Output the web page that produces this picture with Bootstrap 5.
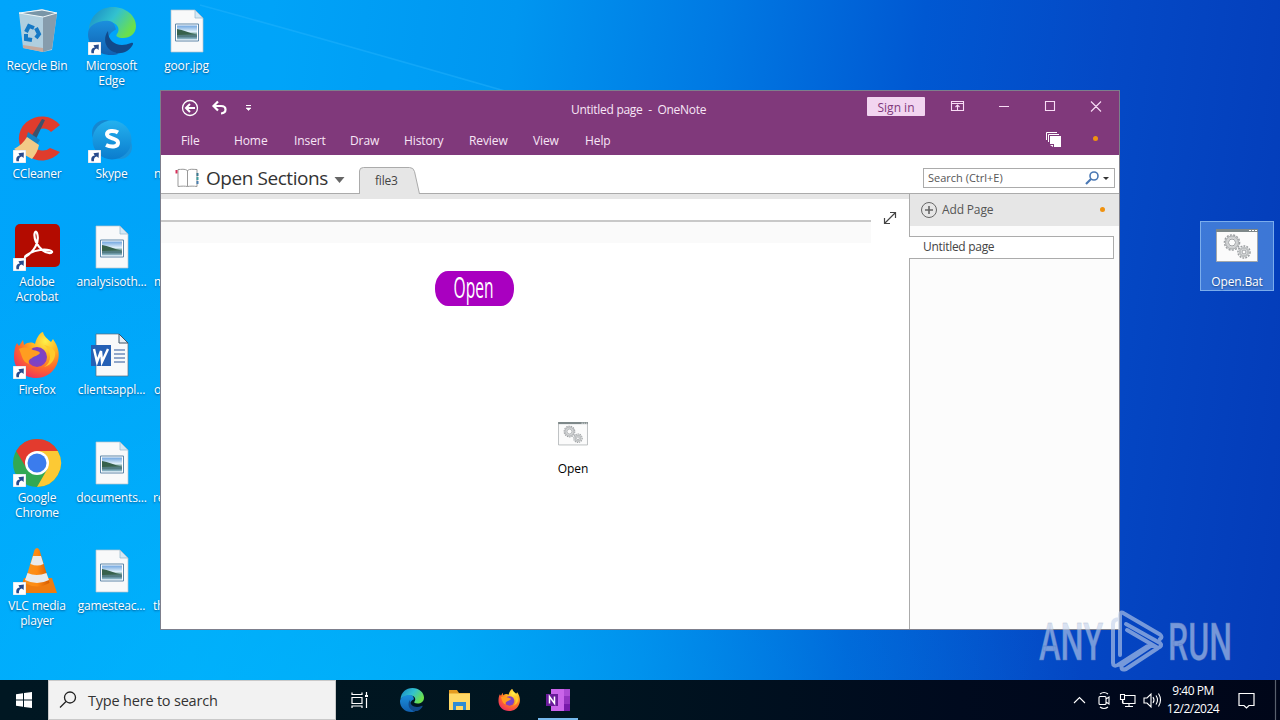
<!DOCTYPE html>
<html lang="en">
<head>
<meta charset="utf-8">
<title>Desktop</title>
<link href="https://cdn.jsdelivr.net/npm/bootstrap@5.3.0/dist/css/bootstrap.min.css" rel="stylesheet">
<style>
body{width:1280px;height:720px;overflow:hidden;font-family:"Open Sans","Noto Sans",sans-serif;font-size:12px;line-height:15px}
svg{display:block;flex:none;overflow:visible}
.desk{height:680px;background:
 radial-gradient(ellipse 760px 560px at 330px 760px,rgba(0,190,255,.65),rgba(0,190,255,0) 100%),
 linear-gradient(97deg,#00a5fb 0,#00a3f8 20%,#0096f0 38%,#0079e3 53%,#0058d2 68%,#0449c6 82%,#043bb8 100%)}
.ray{left:200px;top:0}
.icons{display:grid;grid-template-columns:74px 75px 75px;grid-auto-flow:column;grid-template-rows:repeat(6,108px);width:224px}
.dicon{padding-top:7px;color:#fff;text-align:center;text-shadow:0 1px 2px rgba(0,40,90,.65);line-height:15px;font-size:12px;letter-spacing:-.17px}
.dicon svg{width:48px;height:48px;margin:0 auto 3px}
.peek{padding:58px 0 0 5px;text-align:left}
.bat{left:1200px;top:221px;width:74px;height:70px;background:rgba(110,165,235,.55);border:1px solid rgba(150,195,245,.7)}
.bat svg{width:42px;height:34px;margin:7px auto 11px}
.win{left:160px;top:90px;width:960px;height:540px;border:1px solid #7d7f8c;background:#fff}
.purple{background:#80397b;color:#f8e6f6;height:64px}
.titlebar{height:32px}
.apptitle{margin-left:310px;padding-top:11px;white-space:pre;letter-spacing:-.28px}
.tabs{display:grid;grid-template-columns:53px 60px 56px 54px 65px 64px 52px 1fr 24px 20px;padding-left:20px;height:32px;padding-top:2px;letter-spacing:-.1px}
.signin{left:706px;top:6px;width:58px;height:19px;background:#f2d5f0;color:#80397b;border-radius:1px;line-height:22px}
.nbar{height:39px;border-bottom:1px solid #ababab;padding-left:14px}
.nbname{font-size:19px;line-height:38px;color:#333;letter-spacing:-.44px;padding:4px 0 0 7px;width:128px;white-space:nowrap}
.tabname{left:16px;top:6px;color:#444;letter-spacing:-.2px}
.sbox{width:192px;height:20px;border:1px solid #ababab;font-size:11px;color:#555;margin-top:13px}
.strip{height:5px;background:#e6e6e6}
.note{width:748px}
.side{width:210px;margin-top:-5px;height:435px;background:#fcfcfc}
.addp{height:32px;background:#e6e6e6;color:#555;border-left:1px solid #ababab}
.seg{border-left:1px solid #ababab}
.pg{height:23px;width:205px;background:#fff;border:1px solid #ababab;border-left:0;color:#444;padding-left:14px;line-height:20px;letter-spacing:-.3px}
.dot{width:5px;height:5px;border-radius:50%;background:#f0920f}
.rule{width:710px;height:23px;background:#fafafa;border-top:2px solid #c8c8c8}
.obtn{width:79px;height:35px;background:#a900c0;border-radius:13px/17px;margin:27px 0 0 274px}
.objt{width:60px;margin:116px 0 0 382px;color:#000;letter-spacing:-.1px}
.objt svg{margin:0 auto 15px}
.task{height:40px;background:linear-gradient(90deg,#001722,#001520 45%,#000a1e 75%,#000619);color:#fff}
.tsearch{width:288px;height:40px;background:#f2f2f2;border:1px solid #c9c9c9;color:#333;font-size:14.5px;letter-spacing:-.2px}
.on{width:40px;height:40px;margin-left:6px;border-bottom:2px solid #76b9ed}
.tb{width:49px;height:40px}
.clock{width:58px;line-height:18px;letter-spacing:-.5px}
.wm{left:1036px;top:604px}
</style>
</head>
<body class="m-0 position-relative">
<svg width="0" height="0" class="position-absolute">
<defs>
<linearGradient id="ph" x1="0" y1="0" x2="0" y2="1"><stop offset="0" stop-color="#6fa5df"/><stop offset=".45" stop-color="#e3f1fa"/><stop offset=".55" stop-color="#8fb7b4"/><stop offset=".75" stop-color="#456f75"/><stop offset="1" stop-color="#9cc7dc"/></linearGradient>
<linearGradient id="e1" x1="0" y1="0" x2="1" y2=".5"><stop offset="0" stop-color="#1684c4"/><stop offset=".55" stop-color="#32c2cf"/><stop offset="1" stop-color="#6be04b"/></linearGradient>
<linearGradient id="e2" x1="0" y1="0" x2="0" y2="1"><stop offset="0" stop-color="#1b8fdd"/><stop offset="1" stop-color="#1160b0"/></linearGradient>
<radialGradient id="ff" cx=".7" cy=".2" r=".9"><stop offset="0" stop-color="#fff04a"/><stop offset=".35" stop-color="#ffb020"/><stop offset=".65" stop-color="#ff6a2c"/><stop offset="1" stop-color="#ea2b63"/></radialGradient>
<radialGradient id="fp"><stop offset="0" stop-color="#6a48d7"/><stop offset="1" stop-color="#8b3fb8"/></radialGradient>
<linearGradient id="sk" x1="0" y1="0" x2="0" y2="1"><stop offset="0" stop-color="#24b1ef"/><stop offset="1" stop-color="#0b7ccd"/></linearGradient>
<linearGradient id="vl"><stop offset="0" stop-color="#f7941e"/><stop offset=".5" stop-color="#ff8a12"/><stop offset="1" stop-color="#d55c00"/></linearGradient>
<symbol id="lnk" viewBox="0 0 12 12"><path d="M0 0h12v12H0z" fill="#fff" stroke="#b9c9d8" stroke-width=".6"/><path d="M3.200 10.300c-.7-3 .3-5 3-5.300L5 3.100 10 2.400 9.800 7.300 8.200 6C6 6.500 5.300 8 5.500 10.300z" fill="#274b8d"/></symbol>
<symbol id="img" viewBox="0 0 48 48"><path d="M8 3h24l8 8v34H8z" fill="#f8f9fa" stroke="#b8c3cc" stroke-width=".7"/><path d="M32 3v8h8z" fill="#d4e8f5" stroke="#93b4ca" stroke-width=".7"/><path d="M12.500 17h23v17h-23z" fill="#fff" stroke="#5e86a8"/><path d="M14 18.500h20v14H14z" fill="url(#ph)"/><path d="M14 22c6 1 12 4 20 5.500L14 28z" fill="#37614c"/></symbol>
<symbol id="edge" viewBox="0 0 48 48"><path d="M1 22C2 9 12 0 25 0c13 0 23 9 23 19 0 8-6 12-13 12-5 0-8-2-6-4 4-5 0-12-8-12C12 15 5 18 1 22z" fill="url(#e1)"/><path d="M21 14C11 13 0 18 0 27c0 11 9 21 23 21 3 0 6-.5 8-1.500-7-1-11-7-11-13 0-6 4-9 8-11-1-5-3-8-7-8.500z" fill="url(#e2)"/><path d="M20 24c-4 5-4 13 1 18 6 6 17 6 23-3 2-3 1-4-1-3-12 5-23 0-23-12z" fill="#114a8b"/></symbol>
<symbol id="fox" viewBox="0 0 48 48"><path d="M4 12l2 3 4-6 1 5c4-3 8-3 11-1 2-8 6-12 8-12 1 5 5 7 8 10l2-3c5 7 7 14 5 22-3 11-12 17-22 17C11 47 1 38 1 26c0-6 1-11 3-14z" fill="url(#ff)"/><circle cx="24" cy="26" r="10" fill="url(#fp)"/><path d="M6 18c5-2 9-2 14 1 4 1 6 1 7 3-2 3-6 3-8 5-2 1-4 2-3 6-7-2-7-9-10-15z" fill="#ff9d20"/><path d="M31 14c8 6 8 18 0 22 8-2 12-9 11-15-2-4-6-6-11-7z" fill="#ffca2b"/></symbol>
<symbol id="gears" viewBox="0 0 42 34"><path d="M.5.5h41v32H.5z" fill="#fbfbfb" stroke="#a4a8ab"/><path d="M0 0h42v3H0z" fill="#7e8889"/><path d="M33 1h2v1h-2zm3 0h2v1h-2zm3 0h2v1h-2z" fill="#fff"/><g fill="none" stroke="#9b9ea1"><circle cx="16" cy="13.500" r="7.500" stroke-width="1.600" stroke-dasharray="2 1.300"/><circle cx="16" cy="13.500" r="5.500" stroke="#cfd1d2" stroke-width="3"/><circle cx="16" cy="13.500" r="6.500" stroke-width=".7"/><circle cx="16" cy="13.500" r="3.500"/><circle cx="28" cy="23" r="6" stroke-width="1.600" stroke-dasharray="1.800 1.200"/><circle cx="28" cy="23" r="4" stroke="#bec1c2" stroke-width="2.500"/><circle cx="28" cy="23" r="2"/></g></symbol>
</defs></svg>

<main class="desk position-relative">
<svg class="ray position-absolute" width="320" height="92"><path d="M0 5Q110 35 305 91L0 91z" fill="#00aeff" opacity=".16"/><path d="M0 5Q110 35 305 91" fill="none" stroke="#32b9ff" stroke-width="1.500" opacity=".35"/></svg>
<div class="icons position-relative">
 <div class="dicon"><svg viewBox="0 0 48 48"><path d="M6 6l23-4 15 4-5 37-9 2-20-4z" fill="#b9d1dd" opacity=".95"/><path d="M30 9l14-3-5 36-9 3z" fill="#869cac"/><path d="M6 6l23-3 15 3-14 4z" fill="#7996a8" stroke="#f0f8fb"/><path d="M10 38l20 3v4l-20-4z" fill="#c5a99d"/><g fill="none" stroke="#1679c5" stroke-width="4"><path d="M13 25l3-6 5 2M23 21l3 6-3 4M19 33l-6-1v-5"/></g></svg>Recycle Bin</div>
 <div class="dicon"><svg viewBox="0 0 48 48"><path d="M47 10A23 22 0 1 0 47 37L37 33A11 11 0 1 1 38 17z" fill="#df3c2c"/><path d="M29 4l3 1-9 19-5-2z" fill="#3d526c"/><path d="M15 17l12 8-4 6-10-7z" fill="#1683c4"/><path d="M14 22l12 8c-1 6-4 10-7 14L1 34c6-3 10-7 13-12z" fill="#f2ca87"/><use href="#lnk" x="0" y="35" width="13" height="13"/></svg>CCleaner</div>
 <div class="dicon"><svg viewBox="0 0 48 48"><rect x="2" y="1" width="45" height="43" rx="5" fill="#b30b00"/><path d="M12 34C21 29 27 19 24 10c-2-4-4 2-1 9 3 6 9 12 15 11 4-2-4-4-11-3-7 1-15 5-15 7z" fill="none" stroke="#fff" stroke-width="2.200"/><use href="#lnk" x="0" y="35" width="13" height="13"/></svg>Adobe<br>Acrobat</div>
 <div class="dicon"><svg viewBox="0 0 48 48"><use href="#fox"/><use href="#lnk" x="0" y="35" width="13" height="13"/></svg>Firefox</div>
 <div class="dicon"><svg viewBox="0 0 48 48"><circle cx="24" cy="24" r="24" fill="#32a853"/><path d="M3.200 12A24 24 0 0 1 44.800 12H24L14 30z" fill="#e33b2e"/><path d="M44.800 12A24 24 0 0 1 24 48L34.400 30 24 12z" fill="#fcc934"/><circle cx="24" cy="24" r="12" fill="#fff"/><circle cx="24" cy="24" r="9.500" fill="#3b7ced"/><use href="#lnk" x="0" y="35" width="13" height="13"/></svg>Google<br>Chrome</div>
 <div class="dicon"><svg viewBox="0 0 48 48"><path d="M11 31h28l5 15H6z" fill="#ef7c10"/><path d="M21.500 3q2.500-4 5 0l10 33q-12 7-25 0z" fill="url(#vl)"/><path d="M20 9h8l2.500 8q-6 3-13 0zM14.500 26q9 4 19 0l2.500 7q-12 6-24 0z" fill="#e9eaeb"/><use href="#lnk" x="0" y="35" width="13" height="13"/></svg>VLC media<br>player</div>
 <div class="dicon"><svg viewBox="0 0 48 48"><use href="#edge"/><use href="#lnk" x="0" y="35" width="13" height="13"/></svg>Microsoft<br>Edge</div>
 <div class="dicon"><svg viewBox="0 0 48 48"><circle cx="17" cy="18" r="13" fill="#1687d0"/><circle cx="32" cy="32" r="12" fill="#1a93da"/><circle cx="24" cy="25" r="19.500" fill="url(#sk)"/><path d="M30 17.500c-4-2.500-11-2-11 1.800 0 5 11 3 11 8.400 0 4.500-7 4.800-12 2.300" fill="none" stroke="#fff" stroke-width="4"/><use href="#lnk" x="0" y="35" width="13" height="13"/></svg>Skype</div>
 <div class="dicon"><svg><use href="#img"/></svg>analysisoth...</div>
 <div class="dicon"><svg viewBox="0 0 48 48"><path d="M8 3h23l9 9v33H8z" fill="#f8f9fa" stroke="#5b6c78" stroke-width=".7"/><path d="M31 3v9h9z" fill="#e4edf4" stroke="#3d5266"/><path d="M26 19h11M26 23h11M26 27h11M26 31h11" stroke="#2b579a" stroke-width="1.200"/><path d="M3 14h20v21H3z" fill="#2560b5"/><path d="M6 18l3 13 4-11 1 11 6-13" fill="none" stroke="#fff" stroke-width="2.400"/></svg>clientsappl...</div>
 <div class="dicon"><svg><use href="#img"/></svg>documents...</div>
 <div class="dicon"><svg><use href="#img"/></svg>gamesteac...</div>
 <div class="dicon"><svg><use href="#img"/></svg>goor.jpg</div>
 <div class="dicon peek">n</div><div class="dicon peek">m</div><div class="dicon peek">o</div><div class="dicon peek ps-1">re</div><div class="dicon peek ps-1">th</div>
</div>
<div class="dicon bat position-absolute p-0"><svg><use href="#gears"/></svg>Open.Bat</div>

<section class="win position-absolute">
 <div class="purple">
  <div class="titlebar d-flex position-relative">
   <svg width="100" height="32" fill="none" stroke="#fff"><circle cx="29" cy="17" r="7.500" stroke-width="1.300"/><path d="M34 17h-9M29 13l-4 4 4 4" stroke-width="2"/><path d="M53 15h7c6 0 6 7 0 7.500M57 10.500L52.500 15l4.500 4.500" stroke-width="2.200"/><path d="M85 14.500h5"/><path d="M85 17h5l-2.500 2.500z" fill="#fff" stroke-width=".6"/></svg>
   <div class="apptitle">Untitled page  -  OneNote</div>
   <div class="signin text-center position-absolute">Sign in</div>
   <svg class="ms-auto" width="180" height="32" fill="none" stroke="#f8dcf5"><path d="M12.500 10.500h12v9h-12zM12.500 12.500h12M18.500 19v-5M16.500 16l2-2 2 2M60 15.500h10M106.500 10.500h9v9h-9zM152 10.500l10 10M162 10.500l-10 10" stroke-width="1.100"/></svg>
  </div>
  <div class="tabs"><span class="mt-2">File</span><span class="mt-2">Home</span><span class="mt-2">Insert</span><span class="mt-2">Draw</span><span class="mt-2">History</span><span class="mt-2">Review</span><span class="mt-2">View</span><span class="mt-2">Help</span>
   <svg width="18" height="18" style="margin:6px 0 0 -30px"><path d="M1.500 9V1.500H12M3.500 11V3.500H14" fill="none" stroke="#fff"/><path d="M5 5h11v11H9v-3H5z" fill="#fff"/><path d="M5 14h3v2z" fill="#fff"/></svg><span class="dot" style="margin:11px 0 0 -6px"></span></div>
 </div>
 <div class="nbar d-flex">
  <svg width="24" height="38" fill="none"><path d="M12.500 15.500c-3-2-6-1-9.500-1v17c4-.5 7-.5 9.500 0 3-.5 6-.5 9.500 0v-17c-4 0-7-1-9.500 1zv16" stroke="#999"/><path d="M1.500 15v3.500" stroke="#d8305a" stroke-width="2"/><path d="M22.500 18v3" stroke="#3a7890" stroke-width="2"/><path d="M22.500 22v3" stroke="#3f9fa0" stroke-width="2"/><path d="M22.500 26v3" stroke="#4a80b0" stroke-width="2"/></svg>
  <div class="nbname">Open Sections</div>
  <svg width="32" height="38"><path d="M7.500 22h10l-5 6z" fill="#666"/></svg>
  <div class="position-relative" style="margin-top:12px"><svg width="64" height="27"><path d="M.5 27V4q0-3.500 4-3.500h46q4 0 5 4L60.500 27" fill="#e6e6e6" stroke="#ababab"/></svg><span class="position-absolute tabname">file3</span></div>
  <div class="sbox ms-auto d-flex" style="margin-right:4px"><span style="padding:1px 0 0 4px">Search (Ctrl+E)</span><svg class="ms-auto" width="30" height="18" fill="none"><circle cx="10" cy="7" r="4" stroke="#4a78b4" stroke-width="1.600"/><path d="M7 10l-5 5" stroke="#4a78b4" stroke-width="2.200"/><path d="M19 8h6l-3 3z" fill="#333"/></svg></div>
 </div>
 <div class="strip"></div>
 <div class="d-flex" style="height:430px">
  <div class="note">
   <div class="d-flex" style="height:45px"><div class="rule" style="margin-top:21px"></div><svg width="32" height="32"><path d="M13.500 24.500L24.500 13.500M19 13.500H24.500v5.500M13.500 19V24.500h5.500" fill="none" stroke="#444" stroke-width="1.200"/></svg></div>
   <div class="obtn"><svg width="79" height="35"><text x="18.500" y="26.500" font-family="Open Sans" font-weight="400" font-size="30" textLength="40" lengthAdjust="spacingAndGlyphs" fill="#fff">Open</text></svg></div>
   <div class="objt text-center"><svg width="30" height="24"><use href="#gears"/></svg>Open</div>
  </div>
  <div class="side">
   <div class="addp d-flex"><svg width="30" height="32" fill="none" stroke="#666"><circle cx="19" cy="16" r="7.500"/><path d="M19 12v8M15 16h8" stroke-width="1.600"/></svg><span class="pt-2" style="margin-left:2px;letter-spacing:-.15px">Add Page</span><span class="dot ms-auto" style="margin-top:13px;margin-right:14px"></span></div>
   <div class="seg" style="height:10px"></div>
   <div class="pg">Untitled page</div>
   <div class="seg" style="height:370px"></div>
  </div>
 </div>
</section>
<svg class="wm position-absolute" width="200" height="72" opacity=".6" font-family="Roboto" font-weight="500" font-size="51" fill="#c3d2ec" stroke="#8c9cc0" stroke-width=".4"><text x="3" y="56" textLength="64" lengthAdjust="spacingAndGlyphs">ANY</text><text x="132" y="56" textLength="64" lengthAdjust="spacingAndGlyphs">RUN</text><g fill="none" stroke="#c3d2ec" stroke-width="4" stroke-linejoin="round" stroke-linecap="round"><path d="M84 51V11q0-4 4-1.500l36 21q3 2.500 0 4.500M91 26l31 18q5-2 2-5L90 20M84 15q-7 0-7 5v39q0 4 5 2l33-21M122 44L90 65q-6 2-4-4l30-20"/></g></svg>
</main>

<footer class="task d-flex align-items-center">
 <svg width="48" height="40"><path d="M16 14.200l7-1v6.300h-7zm8-1.100l8-1.100v7.500h-8zM16 20.500h7v6.300l-7-1zm8 0h8V28l-8-1.100z" fill="#fff"/></svg>
 <div class="tsearch d-flex align-items-center"><svg width="39" height="38" fill="none" stroke="#222" stroke-width="1.300"><circle cx="21" cy="16.500" r="5.500"/><path d="M17 20.500l-6 6"/></svg><span>Type here to search</span></div>
 <div class="tb"><svg width="49" height="40" fill="none" stroke="#fff" stroke-width="1.200"><path d="M16 12.500v2h10v-2M16 17.500h10v6H16zM16 28v-2h10v2M30.500 12v3M30.500 18v10"/><path d="M29 16h3" stroke-width="2"/></svg></div>
 <div class="tb d-flex align-items-center justify-content-center ps-1"><svg width="24" height="24"><use href="#edge"/></svg></div>
 <div class="tb"><svg width="49" height="40"><path d="M15 10h8l2 3h11v5H15z" fill="#e49b20"/><path d="M15 13.500h21V30H15z" fill="#ffd866"/><path d="M19 30v-8h13v8h-3v-4h-7v4z" fill="#2e8bd4"/></svg></div>
 <div class="tb d-flex align-items-center justify-content-center ps-1"><svg width="23" height="24"><use href="#fox"/></svg></div>
 <div class="on"><svg width="40" height="38"><path d="M13 9h19v22H13z" fill="#ca64ea"/><path d="M26 9h6v7h-6z" fill="#ae4bd5"/><path d="M26 16h6v8h-6z" fill="#9332bf"/><path d="M26 24h6v7h-6z" fill="#7719aa"/><path d="M8 14h12v12H8z" fill="#6a1b9a"/><path d="M11.500 23.500v-7l5 7v-7" fill="none" stroke="#fff" stroke-width="1.500"/></svg></div>
 <svg class="ms-auto" width="94" height="40" fill="none" stroke="#fff" stroke-width="1.100"><path d="M4 23l5.500-5.500L15 23M30 16.500h5q1 0 1 1v6q0 1-1 1h-5q-1 0-1-1v-6q0-1 1-1zM36 19l3-2v7l-3-2M30 14q4-3 8 0M30 27q4 3 8 0"/><path d="M54 15.500h11v8H53v-3M59 23v3.500M55 26.500h8M50.500 14.500h4v5h-4zM52.500 19v4M74 18h3l4-4v13l-4-4h-3zM83 17q2 3 0 6M86 15.500q3 4.500 0 9M88.500 13.500q4 6.500 0 13"/></svg>
 <div class="clock text-center">9:40&nbsp;PM<br>12/2/2024</div>
 <svg width="58" height="40" fill="none" stroke="#fff" stroke-width="1.200"><path d="M17 13.500h15v12h-5l-2.500 2.500-2.500-2.500h-5z"/><path d="M53.500 0v40" stroke="#59616e"/></svg>
</footer>
<script src="https://cdn.jsdelivr.net/npm/bootstrap@5.3.0/dist/js/bootstrap.bundle.min.js"></script>
</body>
</html>
